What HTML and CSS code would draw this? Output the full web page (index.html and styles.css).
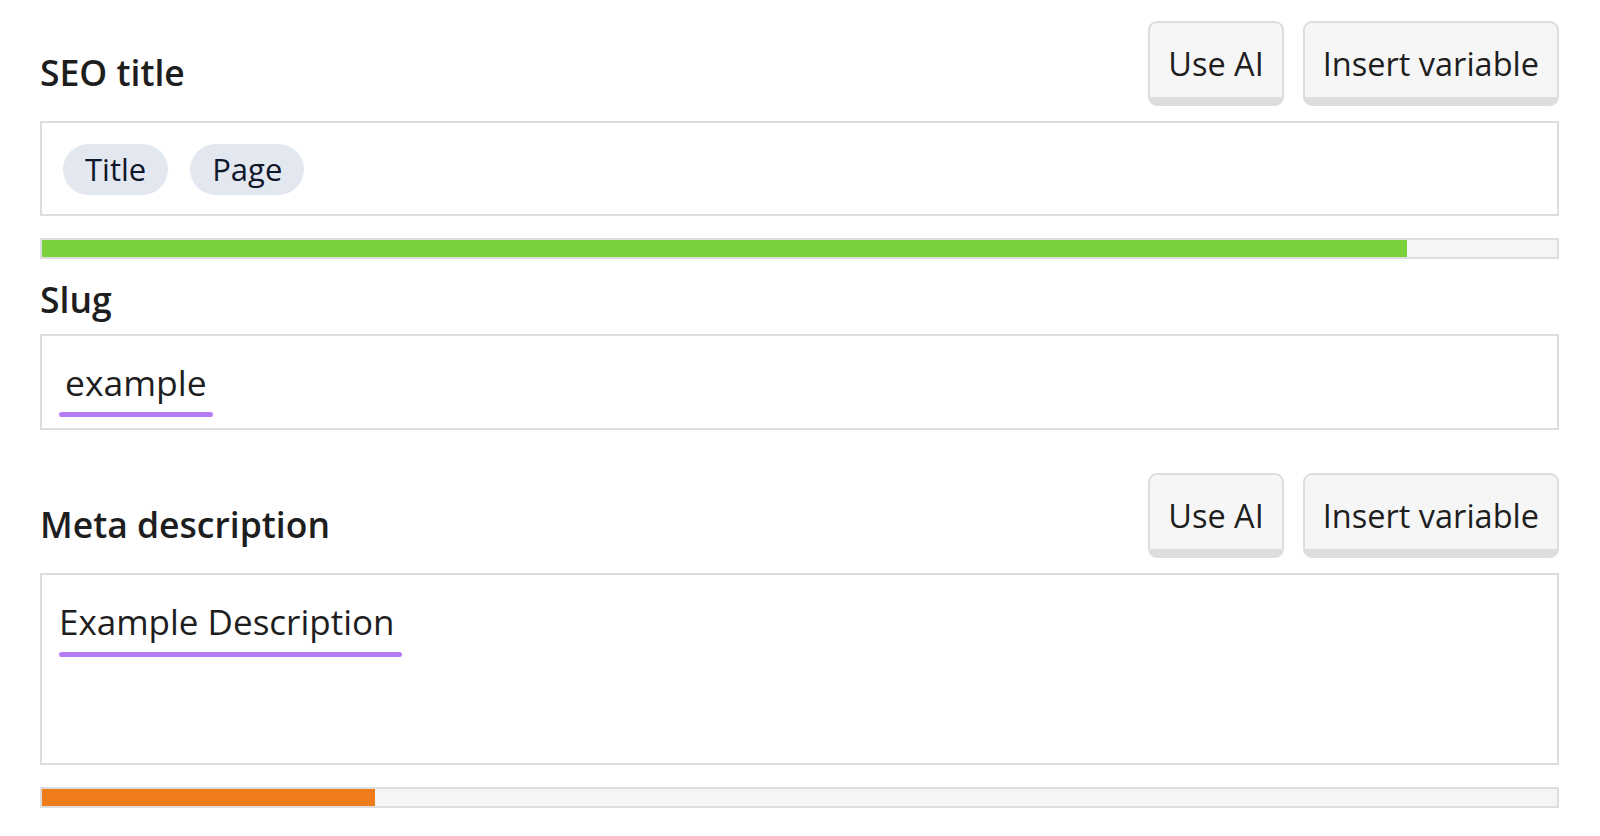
FILE: index.html
```html
<!DOCTYPE html>
<html lang="en">
<head>
    <meta charset="UTF-8">
    <meta name="viewport" content="width=device-width, initial-scale=1.0">
    <title>Search appearance</title>
    <link rel="stylesheet" href="styles.css">
</head>
<body>
    <div class="panel">
        <!-- SEO title -->
        <div class="field-head">
            <label class="field-label">SEO title</label>
            <div class="actions">
                <button class="btn">Use AI</button>
                <button class="btn">Insert variable</button>
            </div>
        </div>
        <div class="input title-input">
            <span class="chip">Title</span>
            <span class="chip">Page</span>
        </div>
        <div class="progress">
            <div class="progress-fill good" style="width: 90.1%"></div>
        </div>

        <!-- Slug -->
        <label class="field-label slug-label">Slug</label>
        <div class="input slug-input">
            <span class="marked">example</span>
        </div>

        <!-- Meta description -->
        <div class="field-head meta-head">
            <label class="field-label">Meta description</label>
            <div class="actions">
                <button class="btn">Use AI</button>
                <button class="btn">Insert variable</button>
            </div>
        </div>
        <div class="input meta-input">
            <span class="marked">Example Description</span>
        </div>
        <div class="progress">
            <div class="progress-fill ok" style="width: 22%"></div>
        </div>
    </div>
</body>
</html>
```

FILE: styles.css
```css
body {
    font-family: "Open Sans", "Noto Sans", Arial, sans-serif;
    color: #1e1e1e;
    background-color: #fff;
    margin: 0;
    padding: 0;
}

.panel {
    padding: 21px 41px 0 40px;
}

.field-head {
    display: flex;
    align-items: flex-end;
    justify-content: space-between;
}

.field-label {
    display: block;
    font-size: 35.5px;
    font-weight: 600;
    line-height: 40px;
    margin-bottom: 14px;
}

.slug-label {
    margin-top: 20px;
    margin-bottom: 15px;
}

.meta-head {
    margin-top: 43px;
}

.actions {
    display: flex;
    gap: 19px;
}

.btn {
    font-family: inherit;
    font-size: 32.5px;
    color: #1e1e1e;
    background-color: #f6f6f6;
    border: 2px solid #dddddd;
    border-bottom-width: 9px;
    border-radius: 9px;
    padding: 8px 18px 0;
    line-height: 66px;
    cursor: pointer;
}

.input {
    border: 2px solid #dddddd;
    background-color: #fff;
    margin-top: 15px;
}

.title-input {
    display: flex;
    gap: 22px;
    padding: 21px 21px 19px;
}

.chip {
    background-color: #e3e8f0;
    color: #0f172a;
    border-radius: 26px;
    font-size: 31px;
    font-weight: 500;
    line-height: 51px;
    padding: 0 22px;
}

.slug-input {
    padding: 24px 17px 11px;
}

.meta-input {
    box-sizing: border-box;
    height: 192px;
    padding: 25px 17px 0;
}

.marked {
    display: inline-block;
    font-size: 35.5px;
    line-height: 44px;
}

.meta-input .marked {
    font-size: 35px;
}

.slug-input .marked {
    padding-left: 6px;
}

.marked::after {
    content: "";
    display: block;
    height: 5px;
    margin-top: 8px;
    border-radius: 3px;
    background-color: #b57bf6;
}

.slug-input .marked::after {
    margin-left: -6px;
    margin-right: -6px;
}

.meta-input .marked::after {
    margin-right: -7px;
}

.progress {
    height: 17px;
    border: 2px solid #dddddd;
    background-color: #f5f5f5;
    margin-top: 22px;
}

.progress-fill {
    height: 100%;
}

.progress-fill.good {
    background-color: #7ad03a;
}

.progress-fill.ok {
    background-color: #ee7c1b;
}
```
